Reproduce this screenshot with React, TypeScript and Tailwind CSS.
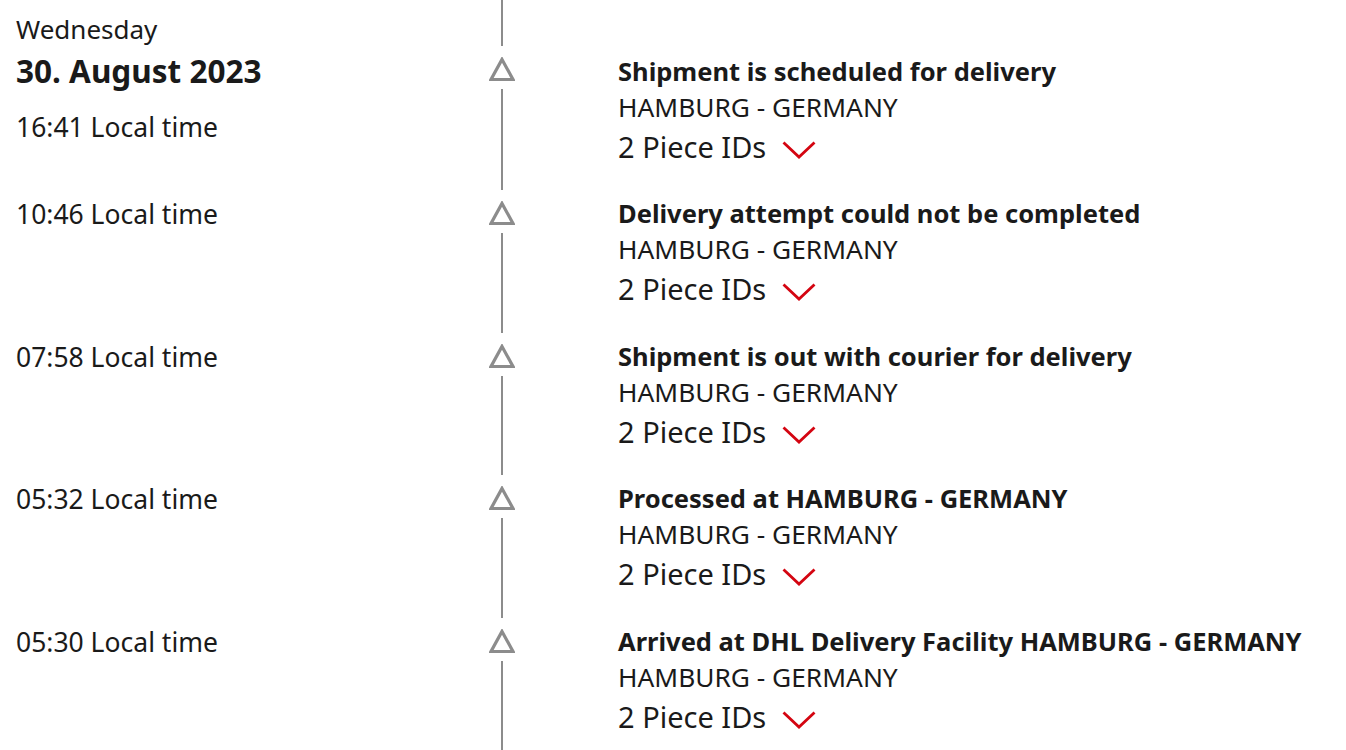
import React from 'react';

interface TrackingEvent {
  time: string;
  title: string;
  location: string;
  pieces: number;
}

const events: TrackingEvent[] = [
  { time: '16:41', title: 'Shipment is scheduled for delivery', location: 'HAMBURG - GERMANY', pieces: 2 },
  { time: '10:46', title: 'Delivery attempt could not be completed', location: 'HAMBURG - GERMANY', pieces: 2 },
  { time: '07:58', title: 'Shipment is out with courier for delivery', location: 'HAMBURG - GERMANY', pieces: 2 },
  { time: '05:32', title: 'Processed at HAMBURG - GERMANY', location: 'HAMBURG - GERMANY', pieces: 2 },
  { time: '05:30', title: 'Arrived at DHL Delivery Facility HAMBURG - GERMANY', location: 'HAMBURG - GERMANY', pieces: 2 },
];

const Triangle = () => (
  <svg width="26" height="24" viewBox="0 0 26 24" className="shrink-0">
    <polygon points="13,2.4 24,22.5 2,22.5" fill="none" stroke="#8c8c8c" strokeWidth="3.2" />
  </svg>
);

const Chevron = () => (
  <svg width="34" height="18" viewBox="0 0 34 18" className="ml-[16px] mt-[6px] shrink-0">
    <polyline points="1.5,1.5 17,16 32.5,1.5" fill="none" stroke="#d40511" strokeWidth="2.8" />
  </svg>
);

const EventDetails: React.FC<{ ev: TrackingEvent; first: boolean }> = ({ ev, first }) => (
  <div className={`pl-[84px] flex-1 ${first ? 'pt-[54px]' : 'pt-[6px]'}`}>
    <p className="text-[25.5px] leading-[34px] font-bold text-[#1a1a1a] whitespace-nowrap">{ev.title}</p>
    <p className="text-[26.3px] leading-[38px] text-[#1a1a1a] whitespace-nowrap">{ev.location}</p>
    <button className="flex items-center mt-[3px] text-[29px] leading-[36px] text-[#1a1a1a]">
      <span>{ev.pieces} Piece IDs</span>
      <Chevron />
    </button>
  </div>
);

export default function App() {
  return (
    <div className="bg-white min-h-screen" style={{ fontFamily: '"Noto Sans", "Open Sans", sans-serif' }}>
      {events.map((ev, i) => {
        const first = i === 0;
        return (
          <div key={ev.time} className={`flex ${first ? 'h-[190px]' : 'h-[142.5px]'}`}>
            <div className={`w-[470px] pl-4 shrink-0 text-[#1a1a1a] ${first ? 'pt-[13px]' : 'pt-[7px]'}`}>
              {first && (
                <>
                  <p className="text-[26px] leading-[32px]">Wednesday</p>
                  <p className="text-[31.5px] leading-[51px] font-bold">30. August 2023</p>
                </>
              )}
              <p className={`text-[26.5px] leading-[34px] ${first ? 'mt-[14px]' : ''}`}>{ev.time} Local time</p>
            </div>
            <div className="w-[64px] shrink-0 flex flex-col items-center">
              {first && <div className="w-[2px] h-[46px] bg-[#8c8c8c]" />}
              <div className="mt-[11px]">
                <Triangle />
              </div>
              <div className="w-[2px] flex-1 mt-[8px] bg-[#8c8c8c]" />
            </div>
            <EventDetails ev={ev} first={first} />
          </div>
        );
      })}
    </div>
  );
}
